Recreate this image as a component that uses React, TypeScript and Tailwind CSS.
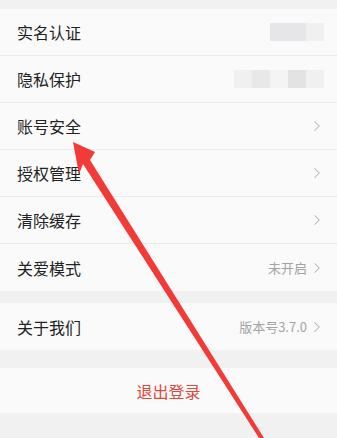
import { ChevronRight } from 'lucide-react';

type Row = { label: string; right?: string; chevron?: boolean; blocks?: string[] };

const group1: Row[] = [
  { label: '实名认证', blocks: ['bg-[#e6e6e8]', 'bg-[#e6e6e8]', 'bg-[#f0f0f1]'] },
  { label: '隐私保护', blocks: ['bg-[#f0f0f0]', 'bg-[#e8e8e9]', 'bg-[#f4f4f4]', 'bg-[#e3e3e4]', 'bg-[#f0f0f0]'] },
  { label: '账号安全', chevron: true },
  { label: '授权管理', chevron: true },
  { label: '清除缓存', chevron: true },
  { label: '关爱模式', right: '未开启', chevron: true },
];

function SettingRow({ row, last }: { row: Row; last?: boolean }) {
  return (
    <div className={`flex h-[47px] items-center justify-between pl-[17px] pr-[11px] ${last ? '' : 'border-b border-[#ececec]'}`}>
      <span className="text-[16px] text-[#222]">{row.label}</span>
      <div className="flex items-center">
        {row.blocks && (
          <div className="mr-[2px] flex">
            {row.blocks.map((b, i) => (
              <div key={i} className={`h-[18px] w-[18px] ${b}`} />
            ))}
          </div>
        )}
        {row.right && <span className="mr-[1px] text-[13px] text-[#a3a3a3]">{row.right}</span>}
        {row.chevron && <ChevronRight className="h-[18px] w-[18px] text-[#b5b5b5]" strokeWidth={1.4} />}
      </div>
    </div>
  );
}

export default function App() {
  return (
    <div
      className="relative h-[438px] w-[337px] overflow-hidden bg-[#f1f1f2]"
      style={{ fontFamily: '"Noto Sans CJK SC", "Noto Sans", sans-serif' }}
    >
      <div className="h-[9px]" />
      <div className="bg-[#fafafa]">
        {group1.map((r, i) => (
          <SettingRow key={r.label} row={r} last={i === group1.length - 1} />
        ))}
      </div>
      <div className="h-[12px]" />
      <div className="bg-[#fafafa]">
        <SettingRow row={{ label: '关于我们', right: '版本号3.7.0', chevron: true }} last />
      </div>
      <div className="h-[18px]" />
      <div className="flex h-[45px] items-center justify-center bg-[#fafafa]">
        <span className="text-[16px] text-[#e2483c]">退出登录</span>
      </div>

      {/* red annotation arrow */}
      <svg className="pointer-events-none absolute left-0 top-0" width="337" height="438" viewBox="0 0 337 438">
        <polygon points="73,142 95,152 90,160 264,438 259,438 83,164 79,174" fill="#f23a36" />
      </svg>
    </div>
  );
}
